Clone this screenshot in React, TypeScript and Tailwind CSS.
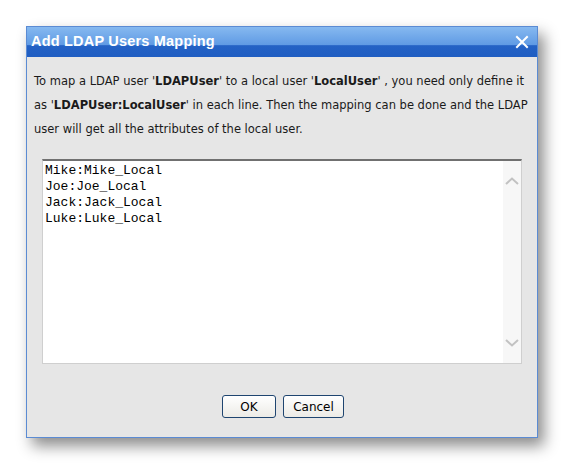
import React from 'react';

const mappings = ['Mike:Mike_Local', 'Joe:Joe_Local', 'Jack:Jack_Local', 'Luke:Luke_Local'];

export default function App() {
  return (
    <div className="w-[564px] h-[464px] bg-white pt-[26px] pl-[26px] font-['DejaVu_Sans',sans-serif]">
      {/* Dialog */}
      <div className="w-[512px] h-[412px] flex flex-col border border-[#5b8bd3] bg-[#e6e6e6] shadow-[6px_8px_14px_rgba(0,0,0,0.45)]">
        {/* Title bar */}
        <div className="h-[30px] flex items-center justify-between pl-[4px] pr-[8px] bg-[linear-gradient(#86b9f0_0%,#5f9ae4_60%,#2462c5_62%,#1f5dc2_100%)]">
          <span className="text-white font-bold text-[14.5px] font-['Liberation_Sans',sans-serif] tracking-[0.2px]">
            Add LDAP Users Mapping
          </span>
          <svg width="14" height="14" viewBox="0 0 14 14">
            <path d="M2 2 L12 12 M12 2 L2 12" stroke="white" strokeWidth="2" strokeLinecap="square" />
          </svg>
        </div>

        {/* Description */}
        <div className="pl-[7px] pt-[12px] text-[11.5px] leading-[24px] text-[#1a1a1a] whitespace-nowrap">
          To map a LDAP user '<b>LDAPUser</b>' to a local user '<b>LocalUser</b>' , you need only define it
          <br />
          as '<b>LDAPUser:LocalUser</b>' in each line. Then the mapping can be done and the LDAP
          <br />
          user will get all the attributes of the local user.
        </div>

        {/* Textarea */}
        <div className="mt-[18px] ml-[15px] w-[480px] h-[205px] flex bg-white border border-[#cfcfcf] border-t-2 border-t-[#707070]">
          <div className="flex-1 pl-[2px] pt-[2px] font-['Liberation_Mono',monospace] text-[13px] leading-[16px] text-black">
            {mappings.map((m) => (
              <div key={m}>{m}</div>
            ))}
          </div>
          <div className="w-[18px] bg-[#f7f7f7] flex flex-col items-center justify-between pt-[16px] pb-[16px]">
            <svg width="14" height="8" viewBox="0 0 14 8">
              <path d="M1 7 L7 1.5 L13 7" stroke="#c2c2c2" strokeWidth="2" fill="none" />
            </svg>
            <svg width="14" height="8" viewBox="0 0 14 8">
              <path d="M1 1 L7 6.5 L13 1" stroke="#c2c2c2" strokeWidth="2" fill="none" />
            </svg>
          </div>
        </div>

        {/* Buttons */}
        <div className="flex justify-center gap-[7px] mt-[31px] pl-[2px]">
          <button className="w-[54px] h-[23px] rounded-[3px] border border-[#1f4570] bg-[linear-gradient(#ffffff,#ecebe6)] text-[12px] text-black">
            OK
          </button>
          <button className="w-[61px] h-[23px] rounded-[3px] border border-[#1f4570] bg-[linear-gradient(#ffffff,#ecebe6)] text-[12px] text-black">
            Cancel
          </button>
        </div>
      </div>
    </div>
  );
}
